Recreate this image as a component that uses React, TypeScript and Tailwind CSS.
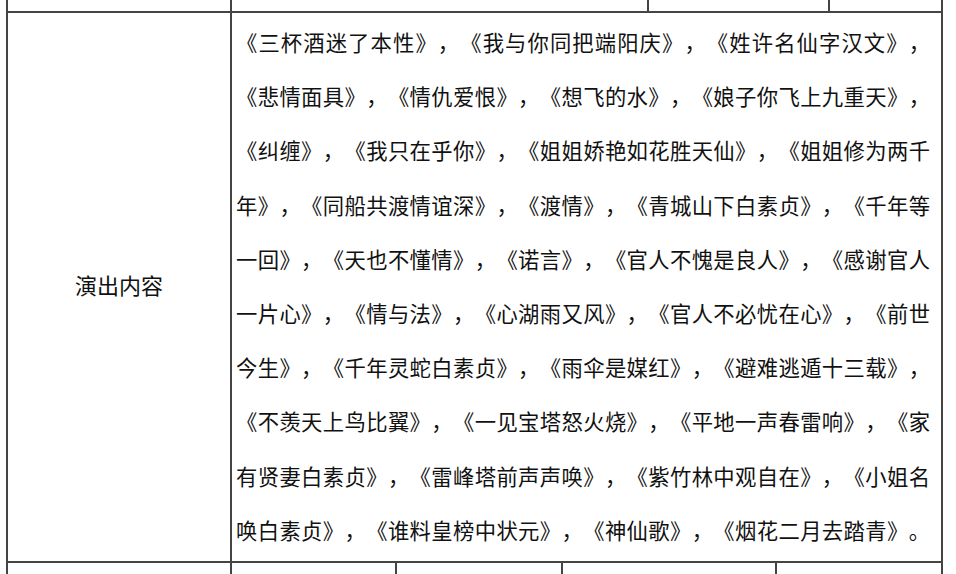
const lines = [
  "《三杯酒迷了本性》，《我与你同把端阳庆》，《姓许名仙字汉文》，",
  "《悲情面具》，《情仇爱恨》，《想飞的水》，《娘子你飞上九重天》，",
  "《纠缠》，《我只在乎你》，《姐姐娇艳如花胜天仙》，《姐姐修为两千",
  "年》，《同船共渡情谊深》，《渡情》，《青城山下白素贞》，《千年等",
  "一回》，《天也不懂情》，《诺言》，《官人不愧是良人》，《感谢官人",
  "一片心》，《情与法》，《心湖雨又风》，《官人不必忧在心》，《前世",
  "今生》，《千年灵蛇白素贞》，《雨伞是媒红》，《避难逃遁十三载》，",
  "《不羡天上鸟比翼》，《一见宝塔怒火烧》，《平地一声春雷响》，《家",
  "有贤妻白素贞》，《雷峰塔前声声唤》，《紫竹林中观自在》，《小姐名",
  "唤白素贞》，《谁料皇榜中状元》，《神仙歌》，《烟花二月去踏青》。",
];

export default function App() {
  return (
    <div className="h-[574px] w-[956px] overflow-hidden bg-white font-['Noto_Sans_CJK_SC',sans-serif] text-[#111] [text-spacing-trim:space-all]">
      <div className="ml-[6px] w-[937px] border-r-2 border-[#444]">
        {/* previous row, cut off at the top */}
        <div className="flex h-[11px]">
          <div className="w-[224px] border-l-2 border-[#444]" />
          <div className="w-[417px] border-l-2 border-[#444]" />
          <div className="w-[181px] border-l-2 border-[#444]" />
          <div className="w-[113px] border-l-2 border-[#444]" />
        </div>

        <div className="flex h-[550px] border-t-2 border-[#444]">
          <div className="flex w-[224px] items-center justify-center border-l-2 border-[#444] pb-[6px] text-[22px]">
            演出内容
          </div>
          <div className="flex-1 border-l-2 border-[#444] pl-[4px] pr-[11px] pt-[2px] text-[21.33px] leading-[54.2px]">
            {lines.map((line, i) => (
              <div key={i} className="whitespace-nowrap text-justify [text-align-last:justify] [text-justify:inter-character]">
                {line}
              </div>
            ))}
          </div>
        </div>

        {/* next row, cut off at the bottom */}
        <div className="flex h-[60px] border-t-2 border-[#444]">
          <div className="w-[224px] border-l-2 border-[#444]" />
          <div className="w-[165px] border-l-2 border-[#444]" />
          <div className="w-[166px] border-l-2 border-[#444]" />
          <div className="w-[214px] border-l-2 border-[#444]" />
          <div className="w-[166px] border-l-2 border-[#444]" />
        </div>
      </div>
    </div>
  );
}
